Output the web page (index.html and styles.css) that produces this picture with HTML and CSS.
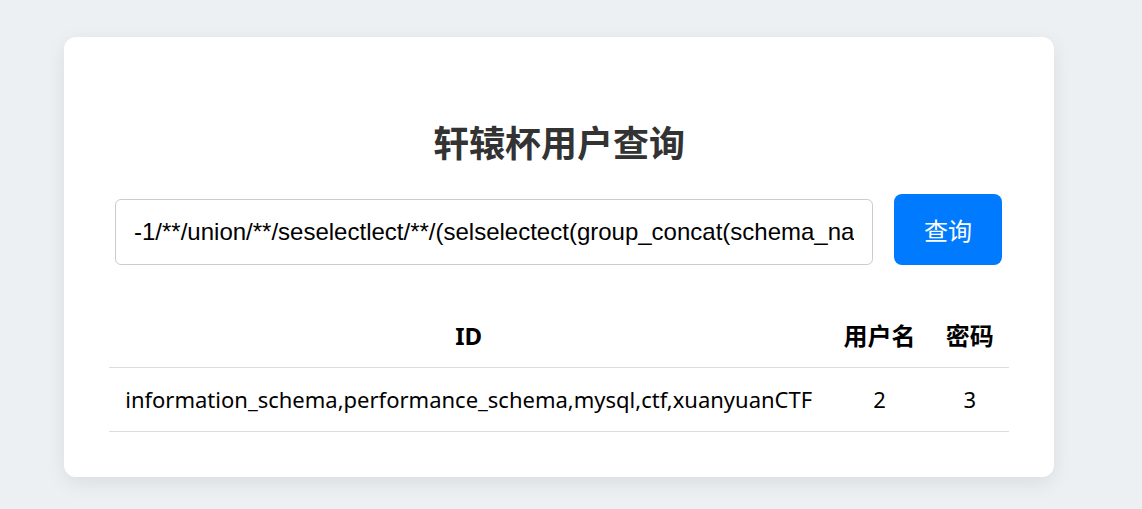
FILE: index.html
```html
<!DOCTYPE html>
<html lang="zh-CN">
<head>
<meta charset="utf-8">
<title>轩辕杯用户查询</title>
<link rel="stylesheet" href="styles.css">
</head>
<body>
<div class="card">
  <h1 class="title">轩辕杯用户查询</h1>
  <form class="search">
    <input class="search-input" type="text" value="-1/**/union/**/seselectlect/**/(selselectect(group_concat(schema_name))/**/from/**/information_schema.schemata),2,3">
    <button class="search-btn" type="button">查询</button>
  </form>
  <table class="result">
    <thead>
      <tr><th>ID</th><th>用户名</th><th>密码</th></tr>
    </thead>
    <tbody>
      <tr><td>information_schema,performance_schema,mysql,ctf,xuanyuanCTF</td><td>2</td><td>3</td></tr>
    </tbody>
  </table>
</div>
</body>
</html>
```
FILE: styles.css
```css
html, body {
  margin: 0;
  padding: 0;
}
body {
  background: #edf0f3;
  font-family: "Noto Sans", "Noto Sans CJK SC", sans-serif;
  padding: 37px 64px;
}
.card {
  width: 990px;
  box-sizing: border-box;
  background: #fff;
  border-radius: 12px;
  box-shadow: 0 6px 20px rgba(0, 0, 0, 0.08);
  padding: 45px;
}
.title {
  margin: 38px 0 31px;
  text-align: center;
  font-family: "Noto Sans CJK SC", sans-serif;
  font-size: 36px;
  font-weight: 700;
  line-height: 43px;
  color: #333;
}
.search {
  display: flex;
  align-items: flex-end;
  gap: 21px;
  padding: 0 7px 0 6px;
  margin: 0;
}
.search-input {
  flex: 1;
  height: 66px;
  box-sizing: border-box;
  border: 1px solid #ccc;
  border-radius: 6px;
  padding: 0 18px;
  font-family: "Liberation Sans", Arial, sans-serif;
  font-size: 24px;
  color: #000;
  outline: none;
}
.search-btn {
  width: 108px;
  height: 71px;
  border: none;
  border-radius: 8px;
  background: #007bff;
  color: #fff;
  font-family: "Noto Sans CJK SC", sans-serif;
  font-size: 24px;
}
.result {
  width: 100%;
  margin-top: 39px;
  border-collapse: collapse;
  font-size: 22px;
  color: #000;
}
.result th, .result td {
  padding: 15px;
  line-height: 33px;
  text-align: center;
  border-bottom: 1px solid #ddd;
  white-space: nowrap;
}
.result th {
  font-family: "Noto Sans", "Noto Sans CJK SC", sans-serif;
  font-size: 24px;
  font-weight: 700;
}
.result td {
  font-weight: 400;
}
```
